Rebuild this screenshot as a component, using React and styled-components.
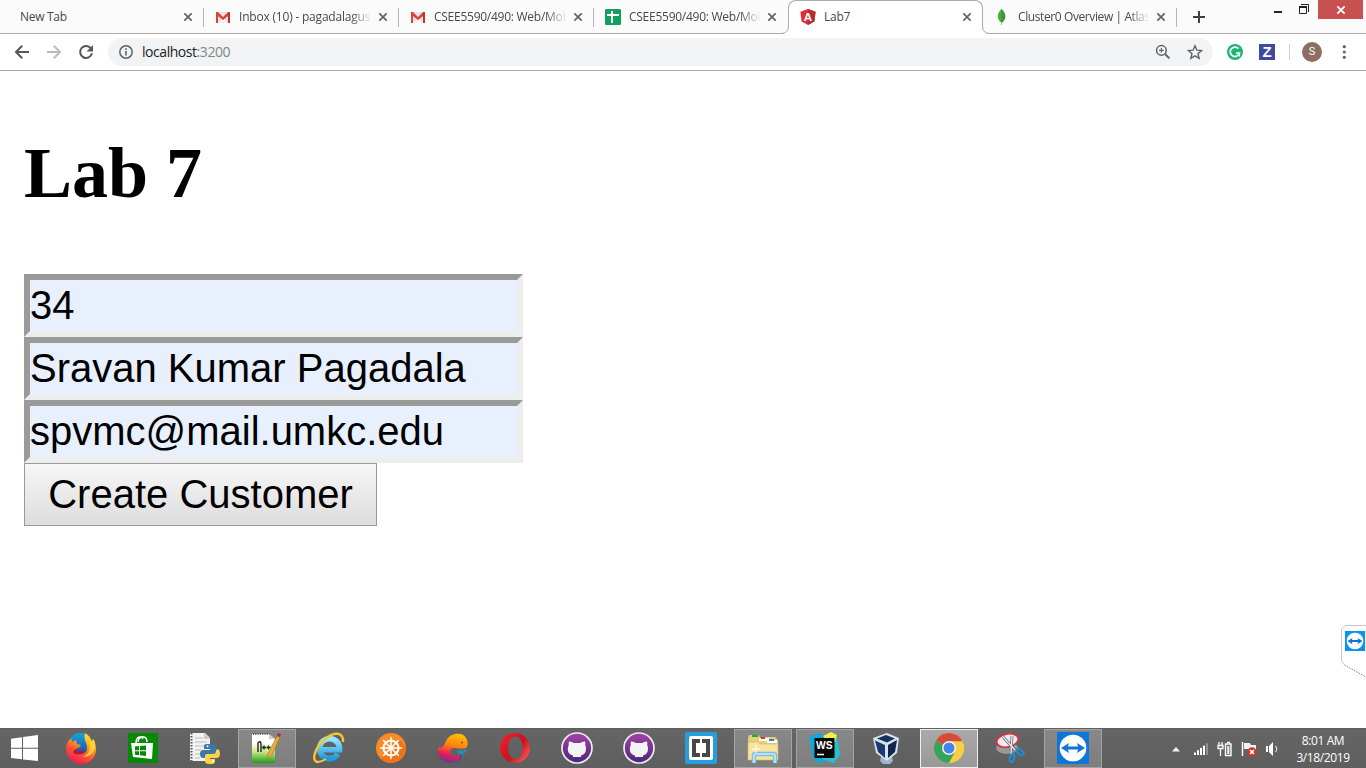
import React from 'react';
import styled, { createGlobalStyle, css } from 'styled-components';

const GlobalStyle = createGlobalStyle`
  * { box-sizing: border-box; }
  body { margin: 0; background: #fff; overflow: hidden; }
  svg { display: block; flex: none; }
`;

const Screen = styled.div`
  position: relative;
  width: 1366px;
  height: 768px;
  display: flex;
  flex-direction: column;
  overflow: hidden;
  background: #fff;
  font-family: 'Open Sans', 'Noto Sans', sans-serif;
`;

/* ---------- tab strip ---------- */

const TabStrip = styled.div`
  display: flex;
  flex: none;
  height: 34px;
  padding-left: 8px;
  background: #fbfbfb;
  box-shadow: inset 0 -1px 0 #ababab;
`;

const TabBox = styled.div`
  position: relative;
  display: flex;
  align-items: center;
  flex: none;
  width: ${(p) => p.$width}px;
  height: 34px;
  padding: 0 12px 1px ${(p) => (p.$icon ? 11 : 12)}px;
  ${(p) =>
    p.$active &&
    css`
      background: #fff;
      border: 1px solid #ababab;
      border-bottom: 0;
      border-radius: 8px 8px 0 0;
      padding: 0 11px 2px 11px;
    `}
`;

const TabDivider = styled.span`
  position: absolute;
  right: 0;
  top: 8px;
  width: 1px;
  height: 19px;
  background: #b4b4b4;
`;

const TabFoot = styled.svg`
  position: absolute;
  bottom: 0;
  ${(p) => (p.$side === 'left' ? 'left: -8px;' : 'right: -8px;')}
`;

const Favicon = styled.span`
  display: flex;
  justify-content: center;
  width: 16px;
  margin-right: 8px;
`;

const TabTitle = styled.span`
  flex: 1;
  min-width: 0;
  overflow: hidden;
  white-space: nowrap;
  font-size: 12px;
  line-height: 18px;
  letter-spacing: ${(p) => p.$track || 0}px;
  color: #45494d;
  margin-right: 7px;
  ${(p) => p.$fade && 'mask-image: linear-gradient(90deg, #000 84%, transparent 100%);'}
`;

const NewTab = styled.div`
  display: flex;
  align-items: center;
  padding-left: 15px;
`;

const WindowControls = styled.div`
  display: flex;
  margin-left: auto;
  padding-right: 3px;
`;

const CloseWindow = styled.div`
  display: flex;
  align-items: center;
  justify-content: center;
  width: 45px;
  height: 19px;
  background: #c75050;
`;

/* ---------- toolbar ---------- */

const Toolbar = styled.div`
  display: flex;
  align-items: center;
  flex: none;
  height: 37px;
  padding: 0 13px 1px 14px;
  background: #fff;
  border-bottom: 1px solid #ababab;
`;

const NavButtons = styled.div`
  display: flex;
  gap: 16px;
  margin-right: 14px;
`;

const Omnibox = styled.div`
  display: flex;
  align-items: center;
  width: 1105px;
  height: 28px;
  padding: 0 10px;
  border-radius: 14px;
  background: #f1f3f4;
`;

const Address = styled.span`
  flex: 1;
  margin-left: 8px;
  font-size: 14px;
  line-height: 20px;
  letter-spacing: -0.45px;
  color: #202124;
`;

const Port = styled.span`
  color: #80868b;
`;

const OmniActions = styled.div`
  display: flex;
  gap: 16px;
`;

const Extensions = styled.div`
  display: flex;
  align-items: center;
  margin-left: 14px;
`;

const ZBadge = styled.span`
  width: 16px;
  height: 16px;
  margin-left: 16px;
  background: #3d4a9e;
  color: #fff;
  font: bold 15px/16px 'Liberation Sans', sans-serif;
  text-align: center;
`;

const ToolbarDivider = styled.span`
  width: 1px;
  height: 16px;
  margin: 0 12px 0 14px;
  background: #cfd1d4;
`;

const Avatar = styled.span`
  width: 20px;
  height: 20px;
  margin-right: 14px;
  border-radius: 50%;
  background: #8d6e63;
  color: #fff;
  font: 11px/20px Roboto, sans-serif;
  text-align: center;
`;

/* ---------- page ---------- */

const Page = styled.main`
  flex: 1;
  padding: 61px 24px 0;
`;

const Heading = styled.h1`
  margin: 0 0 59px;
  font: bold 72px/83px 'Liberation Serif', serif;
  color: #000;
`;

const Form = styled.form`
  display: flex;
  flex-direction: column;
  align-items: flex-start;
`;

const Field = styled.input`
  width: 499px;
  height: 63px;
  padding: 0;
  border: 6px solid;
  border-color: #9a9a9a #ededed #ededed #9a9a9a;
  border-radius: 0;
  outline: 0;
  background: #e8f0fe;
  color: #000;
  font: 40px 'Liberation Sans', sans-serif;
`;

const Submit = styled.button`
  width: 353px;
  height: 63px;
  padding: 0;
  border: 1px solid #999;
  border-radius: 0;
  background: linear-gradient(#f6f6f6, #dddddd);
  color: #000;
  font: 40px 'Liberation Sans', sans-serif;
`;

const SideDock = styled.div`
  position: absolute;
  left: 1341px;
  top: 625px;
`;

/* ---------- taskbar ---------- */

const Taskbar = styled.footer`
  display: flex;
  flex: none;
  height: 40px;
  background: linear-gradient(#5c5c5c 0, #656565 2px, #5e5e5e 100%);
`;

const StartButton = styled.div`
  display: flex;
  align-items: center;
  justify-content: center;
  width: 50px;
  padding-right: 1px;
`;

const TaskItem = styled.div`
  display: flex;
  align-items: center;
  justify-content: center;
  width: 58px;
  height: 39px;
  margin: 1px 2px 0;
  padding-bottom: 1px;
  border: 1px solid transparent;
  ${(p) =>
    p.$state === 'open' &&
    css`
      border-color: #a4a4a4;
      background: linear-gradient(#888, #7e7e7e);
    `}
  ${(p) =>
    p.$state === 'focused' &&
    css`
      border-color: #efefef;
      background: linear-gradient(#aaa, #989898);
    `}
`;

const Tray = styled.div`
  display: flex;
  align-items: center;
  margin-left: auto;
  padding-top: 2px;
`;

const TrayIcons = styled.div`
  display: flex;
  align-items: center;
  gap: 8px;
  padding-right: 1px;
  > svg:first-child { margin-right: 4px; }
`;

const Clock = styled.div`
  width: 86px;
  padding-bottom: 1px;
  color: #fff;
  font-size: 12px;
  line-height: 17px;
  letter-spacing: -0.4px;
  text-align: center;
`;

/* ---------- small icons ---------- */

const CloseIcon = ({ color = '#5f6368', size = 8, weight = 1.7 }) => (
  <svg width={size} height={size} viewBox="0 0 8 8">
    <path d="M.3.3l7.4 7.4M7.7.3L.3 7.700" stroke={color} strokeWidth={weight} fill="none" />
  </svg>
);

const GmailIcon = () => (
  <svg width="16" height="16" viewBox="0 0 16 16">
    <path d="M1 3h14v11H1z" fill="#e3e3e3" />
    <path d="M3 14l5-5 5 5z" fill="#f3f3f3" />
    <path d="M1 3h2l5 5 5-5h2v2.5L8 11 1 5.5z" fill="#db4437" />
    <path d="M1 4h2v10H1z" fill="#db4437" />
    <path d="M13 4h2v10h-2z" fill="#b5362b" />
  </svg>
);

const SheetsIcon = () => (
  <svg width="16" height="16" viewBox="0 0 16 16">
    <rect width="16" height="16" rx="1.2" fill="#12a05c" />
    <path d="M2 6h12M7 2v12" stroke="#fff" strokeWidth="2" />
  </svg>
);

const AngularIcon = () => (
  <svg width="16" height="16" viewBox="0 0 16 16">
    <path d="M8 0l7.6 2.7-1.2 9.8L8 16l-6.400-3.500L.4 2.700z" fill="#dd2f35" />
    <path d="M8 0l7.6 2.7-1.2 9.8L8 16z" fill="#b52e31" />
    <text x="8" y="12" fontSize="11.5" fontWeight="bold" textAnchor="middle" fill="#fff" fontFamily="Liberation Sans, sans-serif">A</text>
  </svg>
);

const LeafIcon = () => (
  <svg width="16" height="16" viewBox="0 0 16 16">
    <path d="M7.500 0c5 5 5 10 0 14-5-4-5-9 0-14z" fill="#4faa41" />
    <path d="M7.500 0c5 5 5 10 0 14z" fill="#3f9637" />
    <path d="M7.500 13v3" stroke="#a9b89b" />
  </svg>
);

const PlusIcon = () => (
  <svg width="14" height="14" viewBox="0 0 14 14">
    <path d="M7 1v12M1 7h12" stroke="#3c4043" strokeWidth="2" />
  </svg>
);

const MinimizeIcon = () => (
  <svg width="25" height="19" viewBox="0 0 25 19">
    <path d="M0 12h8" stroke="#222" strokeWidth="2" />
  </svg>
);

const RestoreIcon = () => (
  <svg width="19" height="19" viewBox="0 0 19 19">
    <path d="M2 4.500h7.500V12" stroke="#222" fill="none" />
    <path d="M.5 6.500h7v7h-7z" stroke="#222" fill="none" />
    <path d="M0 7h8" stroke="#222" strokeWidth="2" />
  </svg>
);

const BackIcon = ({ color = '#54585c', forward }) => (
  <svg width="16" height="16" viewBox="0 0 16 16">
    <g transform={forward ? 'rotate(180 8 8)' : undefined}>
      <path d="M15 8H2.500M8.200 1.800L2 8l6.200 6.200" stroke={color} strokeWidth="2" fill="none" />
    </g>
  </svg>
);

const ReloadIcon = () => (
  <svg width="16" height="16" viewBox="0 0 16 16">
    <path d="M13.200 4.700A6 6 0 1 0 14 9.300" stroke="#54585c" strokeWidth="2" fill="none" />
    <path d="M15 1v6.500H8.500z" fill="#54585c" />
  </svg>
);

const InfoIcon = () => (
  <svg width="16" height="16" viewBox="0 0 16 16">
    <circle cx="8" cy="8" r="6.2" stroke="#5f6368" strokeWidth="1.5" fill="none" />
    <path d="M8 7v4.500M8 4.300v1.600" stroke="#5f6368" strokeWidth="1.6" />
  </svg>
);

const ZoomIcon = () => (
  <svg width="16" height="16" viewBox="0 0 16 16">
    <circle cx="6.4" cy="6.4" r="4.8" stroke="#5f6368" strokeWidth="1.5" fill="none" />
    <path d="M10 10l4.400 4.400" stroke="#5f6368" strokeWidth="2" />
    <path d="M4 6.400h4.800M6.400 4v4.800" stroke="#5f6368" strokeWidth="1.1" />
  </svg>
);

const StarIcon = () => (
  <svg width="16" height="16" viewBox="0 0 16 16">
    <path d="M8 1.8l1.9 4.4 4.7.4-3.6 3.1 1.1 4.6L8 11.8l-4.1 2.5L5 9.7 1.4 6.6l4.7-.4z" stroke="#5f6368" strokeWidth="1.4" fill="none" />
  </svg>
);

const GrammarlyIcon = () => (
  <svg width="16" height="16" viewBox="0 0 16 16">
    <circle cx="8" cy="8" r="8" fill="#1fb573" />
    <path d="M11.4 4.6A4.7 4.7 0 1 0 12.5 9H9" stroke="#fff" strokeWidth="1.7" fill="none" />
    <path d="M12.4 9v3.600" stroke="#fff" strokeWidth="1.3" />
  </svg>
);

const MenuIcon = () => (
  <svg width="16" height="16" viewBox="0 0 16 16">
    {[2.7, 8, 13.3].map((y) => (
      <circle key={y} cx="8.3" cy={y} r="1.6" fill="#5f6368" />
    ))}
  </svg>
);

/* ---------- taskbar icons ---------- */

const Glyph = ({ children }) => (
  <svg width="32" height="32" viewBox="0 0 32 32">
    {children}
  </svg>
);

const StartIcon = () => (
  <svg width="27" height="27" viewBox="0 0 27 27">
    <path d="M0 3.7l11-1.4v10.5H0zM12 2.100L27 0v12.800H12zM0 13.800h11v10.500L0 23zM12 13.800h15V26l-15-1.600z" fill="#fff" />
  </svg>
);

const FirefoxIcon = () => (
  <Glyph>
    <defs>
      <linearGradient id="fox" x1=".8" y1="0" x2=".3" y2="1">
        <stop offset="0" stopColor="#fff24a" />
        <stop offset=".35" stopColor="#ffb01f" />
        <stop offset=".65" stopColor="#ff5634" />
        <stop offset="1" stopColor="#ed1855" />
      </linearGradient>
      <linearGradient id="globe" x1="0" y1="0" x2="0" y2="1">
        <stop offset="0" stopColor="#13a5df" />
        <stop offset="1" stopColor="#2546a5" />
      </linearGradient>
    </defs>
    <circle cx="15" cy="12" r="11" fill="url(#globe)" />
    <path d="M20 1c4 3 5 6 6 9l2-3c2 3 3 7 3 10 0 9-7 15-15 15S1 25 1 17c0-5 2-8 5-11l1 4 4-2 1 4 4 1c0 2-2 2-5 4 0 4 3 6 6 5 4-1 5-3 5-7 0-5-5-8-1-16z" fill="url(#fox)" />
    <path d="M10 17c3 4 7 1 10 2-2 4-9 5-12 1z" fill="#be172f" />
    <path d="M20 1c5 5 5 8 5 13 0 6-3 9-7 11 8 0 13-6 12-15l-2-3-1 3c-1-4-3-7-7-9z" fill="#ffda32" opacity=".8" />
  </Glyph>
);

const StoreIcon = () => (
  <Glyph>
    <rect x="1" y="1" width="30" height="30" fill="#048a04" />
    <path d="M9 11c0-6 5-8 7-4M11 10c1-7 9-7 9 0" stroke="#fff" strokeWidth="1.5" fill="none" />
    <path d="M4 11h22l-1 16-19-2z" fill="#fff" />
    <path d="M8 14.500l4-.4v4.200H8zM13 14l6-.5v4.800h-6zM8 19.200h4v4l-4-.4zM13 19.200h6v4.700l-6-.6z" fill="#048a04" />
  </Glyph>
);

const PythonIcon = () => (
  <Glyph>
    <path d="M1 1h15l5 5v23H1z" fill="#f2f2f2" />
    <path d="M2.500 1v28" stroke="#555" strokeWidth="2" strokeDasharray="1.5 1.5" />
    <path d="M6 6h8M6 10h12M6 14h11M6 18h6M6 22h5M6 26h5" stroke="#bbb" />
    <path d="M15 1l6 6h-6z" fill="#c8c8c8" />
    <path d="M18 12h6q3 0 3 3v4q0 3-3 3h-5q-3 0-3 3v1h-2c-4 0-4-8 0-8h7v-1h-6v-3q0-2 3-2z" fill="#3c78a8" />
    <path d="M28 17c4 0 4 9 0 9h-7v1h5v2q0 3-3 3h-3q-4 0-4-3v-4q0-3 3-3h5q3 0 3-3z" fill="#ffd548" />
    <circle cx="18.500" cy="14.300" r="1" fill="#fff" />
    <circle cx="24" cy="29.300" r="1" fill="#fff" />
  </Glyph>
);

const NotepadIcon = () => (
  <Glyph>
    <defs>
      <linearGradient id="note" x1="0" y1="0" x2="0" y2="1">
        <stop offset=".3" stopColor="#fff" />
        <stop offset=".6" stopColor="#cbea8b" />
        <stop offset="1" stopColor="#239b16" />
      </linearGradient>
    </defs>
    <path d="M1 2h17l6 5v24H1z" fill="url(#note)" />
    <path d="M2 2h17" stroke="#555" strokeWidth="2" strokeDasharray="1 1.3" />
    <path d="M18 2l6 5h-6z" fill="#ccc" />
    <path d="M7 20v-9q3-3 3 1v8M11 15.500h4M13 13.500v4M15.500 15.500h4M17.500 13.500v4" stroke="#222" strokeWidth="1.400" fill="none" />
    <path d="M26 4l3 1-8 18-4 4v-5z" fill="#e9ae3c" stroke="#9c6d21" strokeWidth=".6" />
    <path d="M27 1l3 1-1 3-3-1z" fill="#b62d35" />
  </Glyph>
);

const ExplorerIcon = () => (
  <Glyph>
    <defs>
      <linearGradient id="ie" x1="0" y1="0" x2="0" y2="1">
        <stop offset="0" stopColor="#9ae7ff" />
        <stop offset="1" stopColor="#1c9bdb" />
      </linearGradient>
    </defs>
    <path d="M25 22A10 10 0 1 1 26.500 15.500v2.200H9" stroke="url(#ie)" strokeWidth="5.600" fill="none" />
    <path d="M5 30C-2 30 1 16 12 7c8-7 19-8 18 3" stroke="#f6c52c" strokeWidth="2.400" fill="none" />
    <path d="M5 30c3 0 5-1 8-3" stroke="#f6c52c" strokeWidth="1.800" fill="none" />
  </Glyph>
);

const HelmIcon = () => (
  <Glyph>
    <circle cx="16" cy="16" r="15" fill="#f98a25" />
    <path d="M6 27A15 15 0 0 0 31 16L25 8z" fill="#f07317" />
    <circle cx="16" cy="16" r="7.500" stroke="#fff" strokeWidth="2.200" fill="none" />
    <circle cx="16" cy="16" r="2.700" fill="#fff" />
    {[0, 45, 90, 135, 180, 225, 270, 315].map((a) => (
      <path key={a} d="M16 13V5.500" stroke="#fff" strokeWidth="1.500" strokeLinecap="round" transform={`rotate(${a} 16 16)`} />
    ))}
  </Glyph>
);

const WhaleIcon = () => (
  <Glyph>
    <defs>
      <linearGradient id="whale" x1=".7" y1="0" x2=".45" y2="1">
        <stop offset="0" stopColor="#ffc400" />
        <stop offset=".45" stopColor="#ff7b13" />
        <stop offset=".75" stopColor="#e71b5b" />
        <stop offset="1" stopColor="#71368c" />
      </linearGradient>
    </defs>
    <path d="M9 9C12 3 18 1 23 2c6 1 9 7 7 13-1 2-6 2-12 1-5-1-7 5-3 7 3 2 6 1 8-1 1 3-3 9-10 9C6 31 2 26 1 21c-1-3 0-5 1-6 4 2 5-2 7-6z" fill="url(#whale)" />
    <path d="M18 31c5-2 8-5 8-9 2-1 3-2 4-4-2-1-4 0-5 1-1-1-3-1-5 0 0 2 1 3 3 3 0 4-2 7-5 9z" fill="#248fac" />
    <path d="M18 31c4-1 7-4 7-8l-2-1c0 4-2 7-5 9z" fill="#71368c" />
    <circle cx="25" cy="10.500" r=".9" fill="#8a4212" />
  </Glyph>
);

const OperaIcon = () => (
  <Glyph>
    <defs>
      <linearGradient id="opera" x1="0" y1="0" x2="1" y2=".8">
        <stop offset="0" stopColor="#ff1c2c" />
        <stop offset=".6" stopColor="#c7131e" />
        <stop offset="1" stopColor="#ff5a55" />
      </linearGradient>
    </defs>
    <path fillRule="evenodd" d="M16 1a15 15 0 1 0 0 30 15 15 0 1 0 0-30zm.5 3.500c4.500 0 7 5 7 11.500s-2.500 11.500-7 11.500S9 22.500 9 16 12 4.500 16.500 4.500z" fill="url(#opera)" />
  </Glyph>
);

const GitHubIcon = ({ id }) => (
  <Glyph>
    <defs>
      <linearGradient id={id} x1="0" y1="0" x2="0" y2="1">
        <stop offset="0" stopColor="#a442a8" />
        <stop offset="1" stopColor="#49287b" />
      </linearGradient>
    </defs>
    <circle cx="16" cy="16" r="15" fill={`url(#${id})`} stroke="#eee" strokeWidth="1.700" />
    <path d="M8 9.500c2-.3 3.500.6 4.500 1.500h7c1-.9 2.500-1.800 4.500-1.500.4 1.500.4 2.500.2 3.500 1 2 1.100 5 .2 7-1 2.500-3 3-4.400 3.500v1.500h-8v-1.500c-2-.5-4-1.500-4.700-3.500-.8-2-.6-5 .5-7-.2-1-.2-2 .2-3.500z" fill="#f4f4f6" />
  </Glyph>
);

const BracketsIcon = () => (
  <Glyph>
    <rect width="32" height="32" rx="2" fill="#259fdb" />
    <rect x="4" y="4" width="24" height="24" rx="2" fill="#fff" />
    <path d="M7 7h8v4h-4v10h4v4H7zM17 7h8v18h-8v-4h4V11h-4z" fill="#484848" />
  </Glyph>
);

const FolderIcon = () => (
  <Glyph>
    <path d="M1 6l1-3h10l1 3h4l1-1h10l3 3v19H1z" fill="#e8ce78" />
    <path d="M5 4h6" stroke="#20aa36" strokeWidth="2" />
    <path d="M12 6h10v3H12z" fill="#fff" />
    <path d="M14 6h4" stroke="#d63a30" strokeWidth="2" />
    <path d="M20 8h10v3H20z" fill="#fff" />
    <path d="M22 8h5" stroke="#2b83d6" strokeWidth="2" />
    <path d="M1 10h10l3 2h17v16H1z" fill="#f5e3a0" stroke="#d5b65b" strokeWidth=".6" />
    <path d="M7 31v-8q0-1 2-1h17q2 0 2 1v8" stroke="#80bddb" strokeWidth="4.500" fill="none" />
    <path d="M7 31v-8q0-1 2-1h17q2 0 2 1v8" stroke="#b7e2f2" strokeWidth="2.200" fill="none" />
    <path d="M9 13v8M5 17h8" stroke="#fff" />
  </Glyph>
);

const WebStormIcon = () => (
  <Glyph>
    <path d="M0 5l9-4 9 4-2 23-5 4-7-5z" fill="#14a8d5" />
    <path d="M13 7l15-2 3 17-6 9-12-4z" fill="#20c3d4" />
    <path d="M14 4l8-4 6 3-2 7-8-1z" fill="#f2ee4d" />
    <rect x="5.500" y="6" width="20" height="20" fill="#080808" />
    <text x="7" y="16.500" fontSize="10" fontWeight="bold" fill="#fff" fontFamily="Liberation Sans, sans-serif" textLength="16.500" lengthAdjust="spacingAndGlyphs">WS</text>
    <path d="M8 22.500h7" stroke="#fff" strokeWidth="1.500" />
  </Glyph>
);

const VirtualBoxIcon = () => (
  <Glyph>
    <path d="M10 25h11l1 4-3 3h-7l-3-3z" fill="#9bb6d3" />
    <path d="M2 6l14-5 12 5-2 15-10 8L5 21z" fill="#d8e2ed" />
    <path d="M6 6.500L15 3l9 3.500-8 4z" fill="#143260" />
    <path d="M4 8.500l10 4.500v13l-7-6z" fill="#153b70" />
    <path d="M17 13l9-5-2 12-7 6z" fill="#0d274e" />
  </Glyph>
);

const ChromeIcon = () => (
  <Glyph>
    <circle cx="16" cy="16" r="15" fill="#f8ce45" />
    <path d="M16 16L3 8.500a15 15 0 0 0 13 22.500l6-10z" fill="#36a35a" />
    <path d="M16 16L3 8.500A15 15 0 0 1 29.500 9.500H16z" fill="#d84a3e" />
    <path d="M16 9.500h13.500A15 15 0 0 1 16 31l6-11z" fill="#f8ce45" />
    <circle cx="16" cy="16" r="7" fill="#f5f5f5" />
    <circle cx="16" cy="16" r="5.500" fill="#4585e8" />
  </Glyph>
);

const SnipIcon = () => (
  <Glyph>
    <ellipse cx="12" cy="16" rx="11" ry="6" fill="#999" />
    <ellipse cx="12.500" cy="8.500" rx="11" ry="6.500" fill="#f4e9ee" stroke="#d73640" strokeWidth="1.800" transform="rotate(-12 12.500 8.500)" />
    <path d="M8 5l13 14M17 4l-1 18" stroke="#606a73" strokeWidth="2.800" />
    <path d="M8 5l13 14M17 4l-1 18" stroke="#e4e8ec" strokeWidth="1.400" />
    <ellipse cx="17" cy="26" rx="2.300" ry="4" fill="none" stroke="#258bcc" strokeWidth="2.200" transform="rotate(15 17 26)" />
    <ellipse cx="25" cy="20" rx="2.300" ry="4.200" fill="none" stroke="#258bcc" strokeWidth="2.200" transform="rotate(-48 25 20)" />
  </Glyph>
);

const TeamMark = ({ size = 32 }) => (
  <svg width={size} height={size} viewBox="0 0 32 32">
    <rect width="32" height="32" fill={size > 20 ? '#1075da' : '#0795f5'} />
    <circle cx="16" cy="16" r="13.300" fill="#fff" />
    <path d="M4 16l8-5-1 3.500h10L20 11l8 5-8 5 1-3.500H11l1 3.500z" fill="#1074d5" />
  </svg>
);

const TrayArrow = () => (
  <svg width="10" height="6" viewBox="0 0 10 6">
    <path d="M1 5.500L5 1l4 4.500z" fill="#f3f3f3" />
  </svg>
);

const SignalIcon = () => (
  <svg width="16" height="14" viewBox="0 0 16 14">
    {[0, 1, 2, 3, 4].map((i) => (
      <rect key={i} x={i * 3 + 1} y={10.500 - i * 2.300} width="2" height={2.500 + i * 2.300} fill={i === 4 ? '#909090' : '#fff'} />
    ))}
  </svg>
);

const BatteryIcon = () => (
  <svg width="16" height="16" viewBox="0 0 16 16">
    <path d="M1 4.500h5v3H1zM2 1v3M5 1v3M3.500 8v7" stroke="#fff" strokeWidth="1.300" fill="none" />
    <path d="M8.500 3h5.500v11.500H8.500z" stroke="#fff" strokeWidth="1.400" fill="none" />
    <path d="M10 1.500h3" stroke="#fff" strokeWidth="1.500" />
    <path d="M10.200 5h2.200v8h-2.200z" fill="#eee" />
  </svg>
);

const FlagIcon = () => (
  <svg width="16" height="16" viewBox="0 0 16 16">
    <path d="M1.500 1v14" stroke="#fff" strokeWidth="1.500" />
    <path d="M3 2h6l1 2h5v6H9L8 8H3z" fill="#f2f2f2" />
    <circle cx="11" cy="11" r="4.700" fill="#d3312c" />
    <path d="M9 9l4 4M13 9l-4 4" stroke="#fff" strokeWidth="1.600" />
  </svg>
);

const SpeakerIcon = () => (
  <svg width="14" height="16" viewBox="0 0 14 16">
    <path d="M1 5h2v6H1zM4 5l4-4v14l-4-4z" fill="#fff" />
    <path d="M10.500 5q2.500 3 0 6" stroke="#d8d8d8" strokeWidth="1.200" fill="none" />
  </svg>
);

/* ---------- composition ---------- */

const TABS = [
  { title: 'New Tab', width: 196, track: -0.3 },
  { title: 'Inbox (10) - pagadalagus', icon: <GmailIcon />, width: 195, fade: true, track: -0.2 },
  { title: 'CSEE5590/490: Web/Mob', icon: <GmailIcon />, width: 195, fade: true, track: -0.26 },
  { title: 'CSEE5590/490: Web/Mob', icon: <SheetsIcon />, width: 194, fade: true, last: true, track: -0.26 },
  { title: 'Lab7', icon: <AngularIcon />, width: 195, active: true, track: -0.25 },
  { title: 'Cluster0 Overview | Atlas', icon: <LeafIcon />, width: 194, fade: true, track: -0.4 },
];

const APPS = [
  [FirefoxIcon],
  [StoreIcon],
  [PythonIcon],
  [NotepadIcon, 'open'],
  [ExplorerIcon],
  [HelmIcon],
  [WhaleIcon],
  [OperaIcon],
  [GitHubIcon],
  [GitHubIcon],
  [BracketsIcon],
  [FolderIcon, 'open'],
  [WebStormIcon, 'open'],
  [VirtualBoxIcon],
  [ChromeIcon, 'focused'],
  [SnipIcon],
  [TeamMark, 'open'],
];

function Tab({ tab }) {
  return (
    <TabBox $width={tab.width} $active={tab.active} $icon={Boolean(tab.icon)}>
      {tab.active && (
        <>
          <TabFoot $side="left" width="8" height="8" viewBox="0 0 8 8">
            <path d="M8 0v8H0q7.500 0 7.500-8z" fill="#fff" />
            <path d="M0 7.500Q7.500 7.500 7.500 0" stroke="#ababab" fill="none" />
          </TabFoot>
          <TabFoot $side="right" width="8" height="8" viewBox="0 0 8 8">
            <path d="M0 0v8h8Q.5 8 .5 0z" fill="#fff" />
            <path d="M8 7.500Q.5 7.500 .5 0" stroke="#ababab" fill="none" />
          </TabFoot>
        </>
      )}
      {tab.icon && <Favicon>{tab.icon}</Favicon>}
      <TabTitle $fade={tab.fade} $track={tab.track}>{tab.title}</TabTitle>
      <CloseIcon />
      {!tab.active && !tab.last && <TabDivider />}
    </TabBox>
  );
}

export default function App() {
  return (
    <Screen>
      <GlobalStyle />
      <TabStrip>
        {TABS.map((tab, i) => (
          <Tab key={i} tab={tab} />
        ))}
        <NewTab><PlusIcon /></NewTab>
        <WindowControls>
          <MinimizeIcon />
          <RestoreIcon />
          <CloseWindow><CloseIcon color="#fff" size={8} weight={1.8} /></CloseWindow>
        </WindowControls>
      </TabStrip>
      <Toolbar>
        <NavButtons>
          <BackIcon />
          <BackIcon forward color="#b9bbbd" />
          <ReloadIcon />
        </NavButtons>
        <Omnibox>
          <InfoIcon />
          <Address>localhost<Port>:3200</Port></Address>
          <OmniActions>
            <ZoomIcon />
            <StarIcon />
          </OmniActions>
        </Omnibox>
        <Extensions>
          <GrammarlyIcon />
          <ZBadge>Z</ZBadge>
          <ToolbarDivider />
          <Avatar>S</Avatar>
          <MenuIcon />
        </Extensions>
      </Toolbar>
      <Page>
        <Heading>Lab 7</Heading>
        <Form>
          <Field readOnly value="34" />
          <Field readOnly value="Sravan Kumar Pagadala" />
          <Field readOnly value="spvmc@mail.umkc.edu" />
          <Submit type="button">Create Customer</Submit>
        </Form>
      </Page>
      <Taskbar>
        <StartButton><StartIcon /></StartButton>
        {APPS.map(([Icon, state], i) => (
          <TaskItem key={i} $state={state}>
            <Icon {...(Icon === GitHubIcon ? { id: `git${i}` } : {})} />
          </TaskItem>
        ))}
        <Tray>
          <TrayIcons>
            <TrayArrow />
            <SignalIcon />
            <BatteryIcon />
            <FlagIcon />
            <SpeakerIcon />
          </TrayIcons>
          <Clock>8:01 AM<br />3/18/2019</Clock>
        </Tray>
      </Taskbar>
      <SideDock>
        <svg width="25" height="53" viewBox="0 0 25 53">
          <path d="M25 .5H4L.5 4v32l3 4" fill="none" stroke="#b3bac2" strokeWidth=".8" />
          <path d="M3.500 40L25 52" stroke="#70757a" strokeWidth=".9" strokeDasharray="1.500 1.200" />
          <svg x="4" y="6" width="20" height="20"><TeamMark size={20} /></svg>
        </svg>
      </SideDock>
    </Screen>
  );
}
